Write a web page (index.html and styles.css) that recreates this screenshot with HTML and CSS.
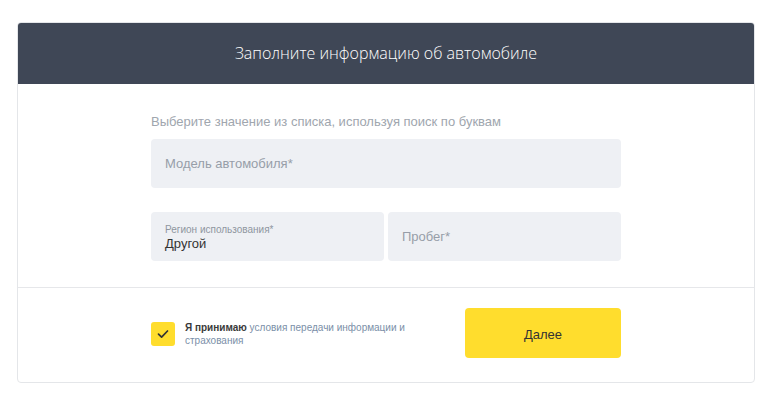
FILE: index.html
```html
<!DOCTYPE html>
<html lang="ru">
<head>
<meta charset="utf-8">
<link rel="stylesheet" href="styles.css">
</head>
<body>
<div class="card">
  <div class="card-header">Заполните информацию об автомобиле</div>
  <div class="card-body">
    <div class="content">
      <div class="hint">Выберите значение из списка, используя поиск по буквам</div>
      <div class="field field-full"><span class="placeholder">Модель автомобиля*</span></div>
      <div class="row">
        <div class="field field-filled">
          <span class="label">Регион использования*</span>
          <span class="value">Другой</span>
        </div>
        <div class="field"><span class="placeholder">Пробег*</span></div>
      </div>
    </div>
  </div>
  <div class="card-footer">
    <div class="content footer-row">
      <div class="agree">
        <span class="checkbox">
          <svg width="14" height="14" viewBox="0 0 14 14"><path d="M2.5 7.2 L5.6 10.2 L11.5 4" fill="none" stroke="#333" stroke-width="1.7" stroke-linecap="round" stroke-linejoin="round"/></svg>
        </span>
        <div class="agree-text">
          <div class="agree-line"><b>Я принимаю</b> <span class="link">условия передачи информации и</span></div>
          <div class="agree-line"><span class="link">страхования</span></div>
        </div>
      </div>
      <button class="btn">Далее</button>
    </div>
  </div>
</div>
</body>
</html>
```
FILE: styles.css
```css
html, body {
  margin: 0;
  padding: 0;
  background: #fff;
  font-family: "Liberation Sans", Arial, sans-serif;
}
.card {
  margin: 22px 0 0 17px;
  width: 736px;
  border: 1px solid #e4e6e9;
  border-radius: 4px;
  overflow: hidden;
  background: #fff;
}
.card-header {
  height: 62px;
  background: #3f4756;
  color: #fff;
  font-family: "Open Sans", sans-serif;
  font-weight: 300;
  font-size: 16px;
  display: flex;
  align-items: center;
  justify-content: center;
  margin: -1px -1px 0;
}
.content {
  width: 470px;
  margin: 0 auto;
}
.card-body {
  padding: 30px 0 26px;
  border-bottom: 1px solid #e6e7ea;
}
.hint {
  font-size: 13px;
  color: #a0a6ae;
  line-height: 15px;
  margin-bottom: 10px;
}
.field {
  background: #eef0f4;
  border-radius: 4px;
  height: 49px;
  box-sizing: border-box;
  padding: 0 14px;
  display: flex;
  flex-direction: column;
  justify-content: center;
}
.placeholder {
  font-size: 13px;
  color: #979ea8;
}
.row {
  margin-top: 24px;
  display: grid;
  grid-template-columns: 1fr 1fr;
  gap: 4px;
}
.label {
  font-size: 10px;
  color: #8f969f;
  line-height: 12px;
  margin-top: 2px;
}
.value {
  font-size: 13px;
  color: #333;
  line-height: 16px;
}
.card-footer {
  padding: 20px 0 24px;
}
.footer-row {
  display: flex;
  align-items: center;
  justify-content: space-between;
}
.agree {
  display: flex;
  align-items: center;
  gap: 10px;
  padding-top: 2px;
}
.checkbox {
  width: 24px;
  height: 24px;
  border-radius: 3px;
  background: #ffdd2d;
  display: flex;
  align-items: center;
  justify-content: center;
  flex: none;
}
.agree-text {
  width: 230px;
  font-size: 10px;
  line-height: 13px;
  color: #333;
}
.agree-text b {
  font-weight: 700;
  color: #3a3a3a;
}
.link {
  color: #7b8fa8;
}
.btn {
  width: 156px;
  height: 50px;
  border: 0;
  border-radius: 4px;
  background: #ffdd2d;
  color: #333;
  font-family: "Liberation Sans", Arial, sans-serif;
  font-size: 13px;
  padding: 2px 0 0;
}
```
